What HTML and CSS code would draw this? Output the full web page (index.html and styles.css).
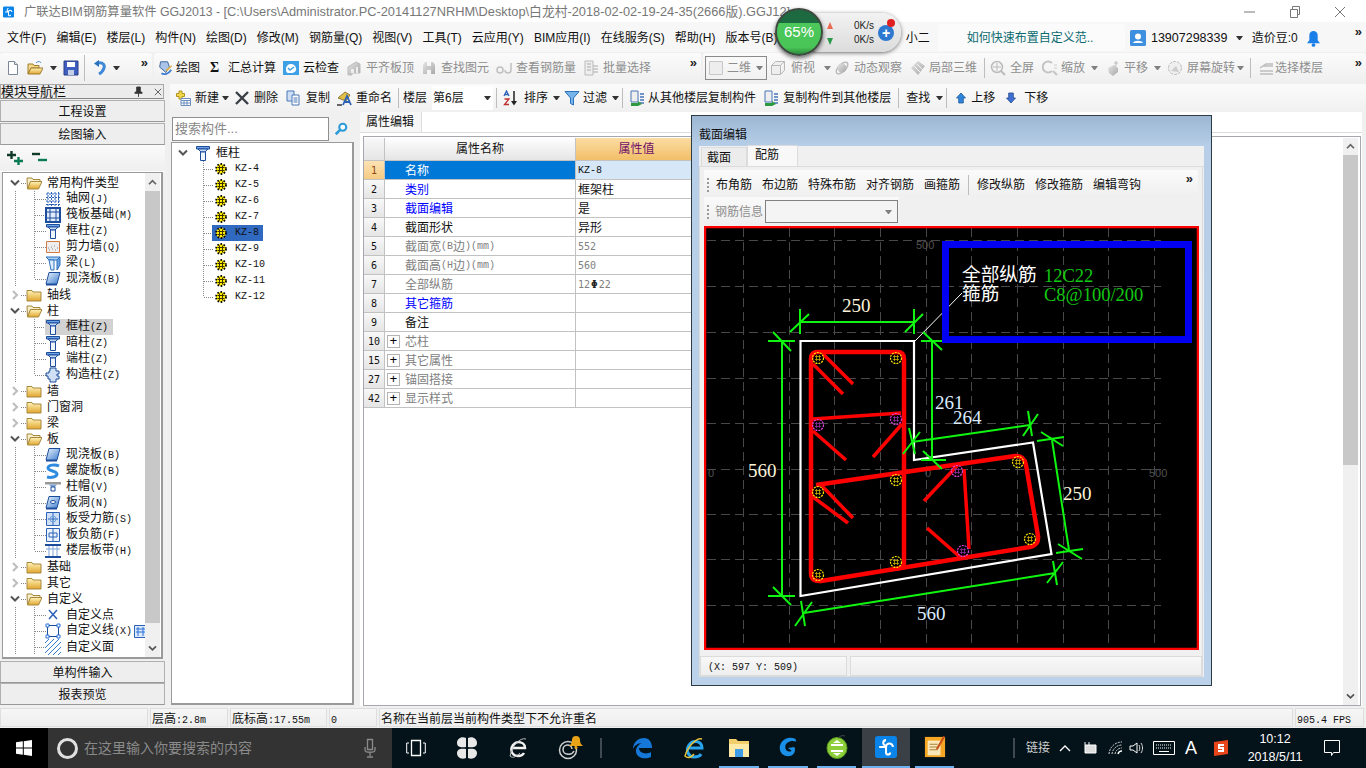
FILE: index.html
```html
<!DOCTYPE html>
<html lang="zh">
<head>
<meta charset="utf-8">
<title>广联达BIM钢筋算量软件</title>
<link rel="stylesheet" href="styles.css">
</head>
<body>
<svg class="defs" width="0" height="0" aria-hidden="true">
<defs>
<linearGradient id="fy" x1="0" y1="0" x2="0" y2="1"><stop offset="0" stop-color="#fff3b8"/><stop offset="1" stop-color="#e0a52e"/></linearGradient>
<linearGradient id="bl" x1="0" y1="0" x2="1" y2="1"><stop offset="0" stop-color="#eaf3fd"/><stop offset="1" stop-color="#3f7fd0"/></linearGradient>
<linearGradient id="gg" x1="0" y1="0" x2="1" y2="1"><stop offset="0" stop-color="#e4e4e4"/><stop offset="1" stop-color="#a8a8a8"/></linearGradient>
</defs>
<symbol id="col" viewBox="0 0 16 16"><path d="M1.500 1.500h13v2.500h-13z" fill="#6ea2e2" stroke="#1c4d9c"/><path d="M3 4l3 3h4l3-3z" fill="#c6dbf6" stroke="#1c4d9c"/><path d="M5.500 7h5v8.500h-5z" fill="#eef5fd" stroke="#1c4d9c"/></symbol>
<symbol id="fold" viewBox="0 0 16 16"><path d="M1 3.500h5l1 1.500h8v9H1z" fill="url(#fy)" stroke="#a7883f"/></symbol>
<symbol id="fopen" viewBox="0 0 16 16"><path d="M1 3h5l1 1.500h7V7H4.500L1.500 14z" fill="#f6eecb" stroke="#a7883f"/><path d="M1.500 14l3-7.500H16L12.500 14z" fill="url(#fy)" stroke="#a7883f"/></symbol>
<symbol id="cd" viewBox="0 0 10 8"><path d="M1 1.500l4 4 4-4" fill="none" stroke="#555" stroke-width="2"/></symbol>
<symbol id="cr" viewBox="0 0 10 10"><path d="M3 1l4 4-4 4" fill="none" stroke="#bdbdbd" stroke-width="2"/></symbol>
<symbol id="cup" viewBox="0 0 10 8"><path d="M1 6l4-4 4 4" fill="none" stroke="#666" stroke-width="2"/></symbol>
<symbol id="gridi" viewBox="0 0 16 16"><path d="M1 3h14M1 6.500h14M1 10h14M1 13.500h14M3 1v14M6.500 1v14M10 1v14M13.500 1v14" stroke="#2b62b8" fill="none" stroke-dasharray="2 1"/></symbol>
<symbol id="raft" viewBox="0 0 16 16"><path d="M1 1h14v14H1z" fill="#dfeafa" stroke="#1c4d9c" stroke-width="2"/><path d="M5 1v14M11 1v14M1 5h14M1 11h14" stroke="#1c4d9c"/></symbol>
<symbol id="wall" viewBox="0 0 16 16"><path d="M1.500 2.500h13v11h-13z" fill="#eee" stroke="#d07a45"/><path d="M4 11h1M7 10h1M10 11h1M6 8h1M9 7h1M3 9h1M12 9h1" stroke="#888"/></symbol>
<symbol id="beam" viewBox="0 0 16 16"><path d="M1 2h14l-3 3H4z" fill="#a9cdf2" stroke="#2b72bd"/><path d="M4 5h5v10H6z" fill="#dcebfb" stroke="#2b72bd"/><path d="M15 2v8l-3 5V5z" fill="#6ea2e2" stroke="#2b72bd"/></symbol>
<symbol id="slab" viewBox="0 0 16 16"><path d="M4 1.500h11L12 13H1z" fill="url(#bl)" stroke="#1c4d9c"/><path d="M1 13h11v1.500H1z" fill="#1c4d9c"/></symbol>
<symbol id="cons" viewBox="0 0 16 16"><path d="M5 1h6v3h3v3h-2v2h2v3h-3v3H5v-3H3V9H1V6h3V4h1z" fill="#cfe0f6" stroke="#1c4d9c"/></symbol>
<symbol id="helix" viewBox="0 0 16 16"><path d="M14 3C10 1 3 2 3 5s9 3 9 6-6 4-10 3" fill="none" stroke="#2f8be0" stroke-width="3"/></symbol>
<symbol id="cap" viewBox="0 0 16 16"><path d="M0 3h16v2.500H0z" fill="#999"/><path d="M4 5.500h8L10 8H6z" fill="#7fa5d8"/><path d="M6 8h4v4H6z" fill="#fff" stroke="#1c4d9c"/></symbol>
<symbol id="hole" viewBox="0 0 16 16"><use href="#slab"/><ellipse cx="8" cy="7" rx="2.500" ry="1.500" fill="#fff" stroke="#1c4d9c"/></symbol>
<symbol id="sbar" viewBox="0 0 16 16"><path d="M1.500 1.500h13v13h-13z" fill="#cfe0f6" stroke="#2b62b8"/><path d="M8 2v12M3 8h10" stroke="#2b62b8"/><circle cx="8" cy="8" r="3" fill="none" stroke="#6ea2e2"/></symbol>
<symbol id="nbar" viewBox="0 0 16 16"><path d="M1.500 1.500h13v13h-13z" fill="#eaf2fc" stroke="#2b62b8"/><path d="M8 2v12M4 6h8v4H4z" fill="none" stroke="#2b62b8"/></symbol>
<symbol id="band" viewBox="0 0 16 16"><path d="M0 2h16M0 14h16" stroke="#1c4d9c" stroke-width="2"/><path d="M4 3v10M8 3v10M12 3v10" stroke="#7fa5d8"/><path d="M1 6h14" stroke="#7fa5d8"/></symbol>
<symbol id="cpt" viewBox="0 0 16 16"><path d="M4 3l8 9M12 3l-8 9" stroke="#2b62b8" stroke-width="1.500"/></symbol>
<symbol id="cln" viewBox="0 0 16 16"><path d="M2.500 2.500h11v11h-11z" fill="none" stroke="#1c4d9c"/><path d="M1 1h3v3H1zM12 1h3v3h-3zM1 12h3v3H1zM12 12h3v3h-3z" fill="#fff" stroke="#2b72d8"/></symbol>
<symbol id="cfc" viewBox="0 0 16 16"><path d="M0 14L14 0M0 9l9-9M0 4l4-4M3 16L16 3M8 16l8-8M13 16l3-3" stroke="#3a7cd0"/></symbol>
<symbol id="gear" viewBox="0 0 14 14"><circle cx="7" cy="7" r="5" fill="#ffee00" stroke="#000" stroke-width="1.800" stroke-dasharray="1.600 1.600"/><path d="M3.500 5.500h7M3.500 8.500h7M5.500 3.500v7M8.500 3.500v7" stroke="#3d3200" stroke-width="1"/></symbol>
<symbol id="plus2" viewBox="0 0 18 16"><path d="M1 5h9M5.500 1v8" stroke="#123a28" stroke-width="2.400"/><path d="M8 11h9M12.500 7v8" stroke="#0a7a52" stroke-width="2.400"/></symbol>
<symbol id="minus2" viewBox="0 0 18 16"><path d="M1 4h8" stroke="#123a28" stroke-width="2.400"/><path d="M7 10h9" stroke="#0a7a52" stroke-width="2.400"/></symbol>
<symbol id="doc" viewBox="0 0 16 16"><path d="M3.500 1.500h6l3 3v10h-9z" fill="#fff" stroke="#7c8796"/><path d="M9.500 1.500v3h3" fill="#dde3ea" stroke="#7c8796"/></symbol>
<symbol id="open" viewBox="0 0 16 16"><path d="M1 4h5l1 1.500h5V8H4l-3 6z" fill="#f4d98a" stroke="#a17c2f"/><path d="M1 14l3-6h12l-3 6z" fill="url(#fy)" stroke="#a17c2f"/><path d="M9 3c2-2 4-2 5 0" fill="none" stroke="#3a7cd0"/></symbol>
<symbol id="save" viewBox="0 0 16 16"><path d="M1 1h14v14H1z" fill="#3f5fc0" stroke="#2a3d86"/><path d="M4 2h8v5H4z" fill="#fff"/><path d="M5 10h6v5H5z" fill="#c4cfe8"/></symbol>
<symbol id="undo" viewBox="0 0 16 16"><path d="M6 3c5-1 7 2 6 5s-3 5-5 6" fill="none" stroke="#3f88d8" stroke-width="3"/><path d="M7 0v7L2 3.500z" fill="#2b72bd"/></symbol>
<symbol id="draw" viewBox="0 0 18 18"><path d="M4 2h8l2 6-4 6-7-6z" fill="#a9c4e8" stroke="#355c96"/><path d="M5 15c3 2 8 1 11-4" fill="none" stroke="#3a7cd0" stroke-width="2"/><path d="M10 11l6-5 1 1-6 6z" fill="#e0b040"/></symbol>
<symbol id="cloud" viewBox="0 0 16 16"><path d="M0 1h16v14H0z" fill="#3da0e6"/><path d="M3 10a5 5 0 0 1 10-2c1 3-2 5-5 5H5c-1 0-2-1-2-3z" fill="#fff"/><path d="M5 8l2 2 4-3" fill="none" stroke="#3da0e6" stroke-width="1.500"/></symbol>
<symbol id="gbox" viewBox="0 0 16 16"><path d="M2 7l8-5 4 2v9H6v2H2z" fill="url(#gg)" stroke="#bbb"/><path d="M5 9h3v4H5zM10 7h2v6h-2z" fill="#eee"/></symbol>
<symbol id="bino" viewBox="0 0 16 16"><path d="M2 14V5l2-3h2v12zM10 14V2h2l2 3v9z" fill="url(#gg)"/><path d="M6 6h4v4H6z" fill="#c8c8c8"/></symbol>
<symbol id="hook" viewBox="0 0 16 16"><path d="M1 10a3 3 0 0 1 6 0 3 3 0 0 1-6 0zM9 10a3 3 0 0 0 6 0V3" fill="none" stroke="#c0c0c0" stroke-width="1.500"/></symbol>
<symbol id="batch" viewBox="0 0 16 16"><path d="M2 1h8v14H2z" fill="#eee" stroke="#bbb"/><path d="M4 4h4M4 7h4M4 10h4M10 6h5M10 9h5M10 12h5" stroke="#aaa"/></symbol>
<symbol id="cube" viewBox="0 0 16 16"><path d="M1.500 5.500h9v9h-9zM1.500 5.500l4-4h9l-4 4M10.500 14.500l4-4v-9" fill="#eee" stroke="#b8b8b8"/></symbol>
<symbol id="orbit" viewBox="0 0 16 16"><ellipse cx="8" cy="8" rx="7.500" ry="3.500" transform="rotate(-45 8 8)" fill="none" stroke="#bbb" stroke-width="1.500"/><circle cx="8" cy="8" r="4.500" fill="url(#gg)"/></symbol>
<symbol id="local" viewBox="0 0 16 16"><path d="M8 1l7 5-7 9-7-7z" fill="url(#gg)"/><path d="M4 6l6 6M7 4l6 6" stroke="#f4f4f4"/></symbol>
<symbol id="zoomf" viewBox="0 0 16 16"><circle cx="7" cy="7" r="5.500" fill="#f4f4f4" stroke="#bbb" stroke-width="1.500"/><path d="M7 3v8M3 7h8" stroke="#bbb"/><path d="M11 11l4 4" stroke="#bbb" stroke-width="2"/></symbol>
<symbol id="zoomc" viewBox="0 0 16 16"><path d="M10 3a5.500 5.500 0 1 0 0 8" fill="none" stroke="#c4c4c4" stroke-width="2"/><path d="M11 11l4 4" stroke="#c4c4c4" stroke-width="2"/><path d="M12 5h3M12 8h3" stroke="#ccc"/></symbol>
<symbol id="hand" viewBox="0 0 16 16"><path d="M3 8l6-3 4 3v4l-5 4-4-3z" fill="url(#gg)"/><path d="M11 1v5M9 3h4" stroke="#bbb"/></symbol>
<symbol id="rot" viewBox="0 0 16 16"><circle cx="8" cy="8" r="6.500" fill="#efefef" stroke="#bbb" stroke-dasharray="3 1"/><path d="M4 11l5-5 3 6z" fill="#ccc"/></symbol>
<symbol id="layer" viewBox="0 0 16 16"><path d="M2 8l6-4h7M2 11h13M2 14h13M5 6h10" fill="none" stroke="#bdbdbd" stroke-width="1.500"/></symbol>
<symbol id="addi" viewBox="0 0 16 16"><path d="M4 1h3v2.500h2.500v3H7V9H4V6.500H1.500v-3H4z" fill="#f1d84a" stroke="#b09320"/><path d="M6 8.500h9.500v7H6z" fill="#fff" stroke="#6c8ebf"/><path d="M6 10.500h9.500M9 10.500v5M12 10.500v5M6 13h9.500" stroke="#6c8ebf"/></symbol>
<symbol id="xi" viewBox="0 0 16 16"><path d="M2 2l12 12M14 2L2 14" stroke="#3a3f46" stroke-width="2.400"/></symbol>
<symbol id="copy" viewBox="0 0 16 16"><path d="M2 1h7v10H2z" fill="#cfe0f6" stroke="#4a76b8"/><path d="M7 5h7v10H7z" fill="#fff" stroke="#4a76b8"/><path d="M8.500 8h4M8.500 10h4M8.500 12h4" stroke="#4a76b8"/></symbol>
<symbol id="ren" viewBox="0 0 16 16"><path d="M2 8l7-6 5 3-4 6z" fill="#e4bf48" stroke="#8c7a2d"/><path d="M1 15h5" stroke="#666" stroke-width="2"/><path d="M7 15l4-9 4 9M9 12h4" fill="none" stroke="#2b62b8" stroke-width="1.800"/></symbol>
<symbol id="sort" viewBox="0 0 16 16"><path d="M1 6l2.500-5L6 6M2 4.500h3" fill="none" stroke="#2b62b8" stroke-width="1.300"/><path d="M1.500 9H6L1.500 14.500H6" fill="none" stroke="#c03030" stroke-width="1.300"/><path d="M11 1v12" stroke="#222" stroke-width="1.500"/><path d="M8 11l3 4.500 3-4.500z" fill="#222"/></symbol>
<symbol id="filt" viewBox="0 0 16 16"><path d="M1 1.500h14L9.500 8v7l-3-1.500V8z" fill="#78b3ea" stroke="#2b72bd"/></symbol>
<symbol id="cpy1" viewBox="0 0 16 16"><path d="M2 1h7v11H2z" fill="#eee" stroke="#4a76b8"/><path d="M11 4h4M11 7h4M11 10h4M11 13h4" stroke="#4a76b8" stroke-width="1.500"/><path d="M2 13h7v-2l4 3-4 2h-7z" fill="#2d9a3d"/></symbol>
<symbol id="upi" viewBox="0 0 16 16"><path d="M8 3l4.500 5H10.300V13H5.700V8H3.500z" fill="#2f83d8" stroke="#1c5aa0" stroke-width=".8"/></symbol>
<symbol id="dni" viewBox="0 0 16 16"><path d="M8 13L3.500 8H5.700V3h4.600v5h2.200z" fill="#3f6fd0" stroke="#23478f" stroke-width=".8"/></symbol>
<symbol id="appi" viewBox="0 0 16 16"><path d="M0 2a2 2 0 0 1 2-2h12a2 2 0 0 1 2 2v12a2 2 0 0 1-2 2H2a2 2 0 0 1-2-2z" fill="#0a84e8"/><path d="M8 3a2 2 0 0 0-2 2c0 1 1 2 2 2v5a1.500 1.500 0 0 0 3 0M3 8h5m0 0a2 2 0 0 1 5 0" fill="none" stroke="#fff" stroke-width="1.500"/></symbol>
<symbol id="user" viewBox="0 0 16 16"><path d="M0 1.500A1.500 1.500 0 0 1 1.500 0h13A1.500 1.500 0 0 1 16 1.500v13a1.500 1.500 0 0 1-1.500 1.500h-13A1.500 1.500 0 0 1 0 14.500z" fill="#3f8fe0"/><circle cx="8" cy="6.500" r="3" fill="#fff"/><path d="M3 13c1-3 9-3 10 0z" fill="#fff"/></symbol>
<symbol id="bell" viewBox="0 0 14 18"><path d="M7 1a4.500 4.500 0 0 0-4.500 4.500V11L0 14h14l-2.500-3V5.500A4.500 4.500 0 0 0 7 1z" fill="#1a7fe8"/><circle cx="7" cy="16" r="2" fill="#1a7fe8"/></symbol>
<symbol id="mag" viewBox="0 0 16 16"><circle cx="10" cy="6" r="4" fill="#fff" stroke="#2e9ad8" stroke-width="2.400"/><path d="M7 9l-5 5" stroke="#2e9ad8" stroke-width="3"/></symbol>
<symbol id="win" viewBox="0 0 16 16"><path d="M0 2.300L6.800 1.300V7.500H0zM7.800 1.200L16 0V7.500H7.800zM0 8.500H6.800V14.700L0 13.700zM7.800 8.500H16V16L7.800 14.800z" fill="#fff"/></symbol>
<symbol id="mic" viewBox="0 0 12 20"><path d="M3.500 1.500h5v10h-5z" fill="none" stroke="#8a8a8a" stroke-width="1.300"/><path d="M1 9v3c0 3 10 3 10 0V9M6 15v3M3 19h6" fill="none" stroke="#8a8a8a" stroke-width="1.300"/></symbol>
<symbol id="tview" viewBox="0 0 20 18"><path d="M5.500 1.500h9v15h-9z" fill="none" stroke="#fff" stroke-width="1.300"/><path d="M3 4H.7v10H3M17 4h2.300v10H17" fill="none" stroke="#fff"/></symbol>
<symbol id="fan" viewBox="0 0 22 24"><path d="M10 2c-5-2-9 1-9 5s4 5 9 4zM12 2c5-2 9 1 9 5s-4 5-9 4zM10 22c-5 2-9-1-9-5s4-5 9-4zM12 22c5 2 9-1 9-5s-4-5-9-4z" fill="#e8e8e8"/></symbol>
<symbol id="ie1" viewBox="0 0 20 24"><path d="M3 12h14c0-6-8-8-12-3-4 6 0 11 5 11 3 0 5-1 6-3" fill="none" stroke="#f2f2f2" stroke-width="2.400"/><path d="M18 3C12 1 4 10 2 20c3 3 7 0 10-3" fill="none" stroke="#bbb"/></symbol>
<symbol id="sw" viewBox="0 0 26 26"><circle cx="10" cy="15" r="8.500" fill="none" stroke="#cfcfcf" stroke-width="1.500"/><path d="M14 14a4.500 4.500 0 1 0-5 5c4 1 6-1 7-3" fill="none" stroke="#cfcfcf" stroke-width="1.500"/><path d="M18 1a4 4 0 0 1 4 4c0 3 1 4 3 6H11c2-2 3-3 3-6a4 4 0 0 1 4-4z" fill="#e8a317"/><circle cx="18" cy="12.500" r="1.500" fill="#e8a317"/></symbol>
<symbol id="edge" viewBox="0 0 20 22"><path d="M1 12C1 4 8 1 12 1c5 0 8 4 8 10H7c0 5 7 7 12 4v5c-6 3-15 1-15-6 0-4 3-7 6-8-4 0-8 3-9 6z" fill="#1578d8"/></symbol>
<symbol id="ie2" viewBox="0 0 22 24"><path d="M4 12h15c0-7-9-9-13-3-4 6 0 12 5 12 3 0 6-1 7-3" fill="none" stroke="#27a5ee" stroke-width="3"/><path d="M19 3C14 1 5 10 2 20c3 3 7 1 9-2" fill="none" stroke="#e6c23a" stroke-width="1.500"/></symbol>
<symbol id="fexp" viewBox="0 0 22 22"><path d="M1 3h7l2 2h11v16H1z" fill="#f2cf6a"/><path d="M1 8h20v13H1z" fill="#ffe9a6"/><path d="M7 13h8v8H7z" fill="#3f9de8"/></symbol>
<symbol id="gapp" viewBox="0 0 24 24"><path d="M20 3C10-1 3 6 3 13c0 6 5 9 9 9 6 0 9-5 7-10l-7 1 4 3c-2 2-7 1-7-4 0-5 6-8 12-6z" fill="#1a8fe8"/></symbol>
<symbol id="green" viewBox="0 0 22 24"><ellipse cx="11" cy="13" rx="10" ry="10.500" fill="#8ccf3a" stroke="#5a9a20"/><path d="M5 10h12M5 16h12" stroke="#fff" stroke-width="2"/><path d="M11 5l4 3H7zM11 21l-4-3h8z" fill="#fff"/><path d="M12 3c2-2 4-3 7-2" fill="none" stroke="#444"/></symbol>
<symbol id="note" viewBox="0 0 24 26"><path d="M1 2h22v22H1z" fill="#f5a623"/><path d="M4 6h14v16H4z" fill="#fbe8b8"/><path d="M6 10h9M6 13h9M6 16h9" stroke="#a07830"/><path d="M21 1l-8 14 2 1 8-14z" fill="#c8501a"/></symbol>
<symbol id="batt" viewBox="0 0 16 14"><path d="M3 4h11v8H3z" fill="#ddd" stroke="#fff"/><path d="M3 1v3M7 1v3" stroke="#fff"/></symbol>
<symbol id="wifi" viewBox="0 0 16 16"><path d="M1 14a13 13 0 0 1 13-12M4 14a10 10 0 0 1 10-9M7 14a7 7 0 0 1 7-6" fill="none" stroke="#ddd" stroke-dasharray="2 1"/><path d="M10 14a4 4 0 0 1 4-3" fill="none" stroke="#fff" stroke-width="1.500"/></symbol>
<symbol id="vol" viewBox="0 0 16 16"><path d="M1 6h3l4-3v10l-4-3H1z" fill="none" stroke="#fff"/><path d="M10 5c1 2 1 4 0 6M12 3c2 3 2 7 0 10" fill="none" stroke="#ddd"/></symbol>
<symbol id="kbd" viewBox="0 0 22 16"><path d="M.500 1.500h21v13H.500z" fill="none" stroke="#fff"/><path d="M3 5h16M3 8h16" stroke="#fff" stroke-dasharray="1 1"/><path d="M6 11.500h10" stroke="#fff"/></symbol>
<symbol id="sogou" viewBox="0 0 16 16"><path d="M1 2l14-2v14L1 16z" fill="#e8451a"/><path d="M11 5H6v3h4v3H5" fill="none" stroke="#fff" stroke-width="2"/></symbol>
<symbol id="notif" viewBox="0 0 16 16"><path d="M.500 .500h15v12H9.500l-2 3v-3h-7z" fill="none" stroke="#fff"/></symbol>
<symbol id="pin" viewBox="0 0 10 12"><path d="M3 1h4v5l2 1v1H1V7l2-1zM5 8v4" fill="#333" stroke="#333"/></symbol>
<symbol id="xs" viewBox="0 0 10 10"><path d="M1 1l8 8M9 1L1 9" stroke="#444"/></symbol>
</svg>

<header class="title">
  <svg class="i ti"><use href="#appi"/></svg>
  <span class="title-text">广联达BIM钢筋算量软件 GGJ2013 - <span class="tp">[C:\Users\Administrator.PC-20141127NRHM\Desktop\白龙村-2018-02-02-19-24-35(2666版).GGJ12]</span></span>
  <div class="winbtns">
    <svg class="wb" viewBox="0 0 12 12"><path d="M0 6h11" stroke="#777"/></svg>
    <svg class="wb" viewBox="0 0 12 12"><path d="M1.500 3.500h7v8h-7zM3.500 3.500v-3h7v8h-2" fill="none" stroke="#777"/></svg>
    <svg class="wb" viewBox="0 0 12 12"><path d="M1 1l10 10M11 1L1 11" stroke="#777"/></svg>
  </div>
</header>

<nav class="menu">
  <span>文件(F)</span><span>编辑(E)</span><span>楼层(L)</span><span>构件(N)</span><span>绘图(D)</span><span>修改(M)</span><span>钢筋量(Q)</span><span>视图(V)</span><span>工具(T)</span><span>云应用(Y)</span><span>BIM应用(I)</span><span>在线服务(S)</span><span>帮助(H)</span><span>版本号(B)</span>
  <span class="xiao">小二</span>
  <div class="tip">如何快速布置自定义范..</div>
  <svg class="i m5"><use href="#user"/></svg>
  <span class="phone">13907298339</span><i class="caret m7"></i>
  <span class="m10">造价豆:0</span>
  <svg class="bell"><use href="#bell"/></svg>
  <span class="chev top">»</span>
</nav>

<div class="tb1">
  <div class="grp g1">
    <svg class="i"><use href="#doc"/></svg>
    <svg class="i m6"><use href="#open"/></svg><i class="caret m7"></i>
    <svg class="i m6"><use href="#save"/></svg>
    <i class="sep tall m5"></i>
    <svg class="i m7"><use href="#undo"/></svg><i class="caret m5"></i>
    <span class="chev">»</span>
  </div>
  <div class="grp g2">
    <svg class="i"><use href="#draw"/></svg><span class="m3">绘图</span>
    <b class="sigma m10">Σ</b><span class="m8">汇总计算</span>
    <svg class="i m7"><use href="#cloud"/></svg><span class="m4">云检查</span>
    <svg class="i m7"><use href="#gbox"/></svg><span class="m4 off">平齐板顶</span>
    <svg class="i m7"><use href="#bino"/></svg><span class="m4 off">查找图元</span>
    <svg class="i m7"><use href="#hook"/></svg><span class="m4 off">查看钢筋量</span>
    <svg class="i m7"><use href="#batch"/></svg><span class="m4 off">批量选择</span>
    <span class="chev">»</span>
  </div>
  <div class="grp g3">
    <div class="combo2d"><svg class="sq" viewBox="0 0 16 16"><path d="M1.500 1.500h13v13h-13z" fill="#ededed" stroke="#c8c8c8"/></svg><span class="off m3">二维</span><i class="caret gray auto"></i></div>
    <svg class="i m3"><use href="#cube"/></svg><span class="off m5">俯视</span><i class="caret gray m9"></i>
    <svg class="i m3"><use href="#orbit"/></svg><span class="off m4">动态观察</span>
    <svg class="i m8"><use href="#local"/></svg><span class="off m3">局部三维</span>
    <i class="sep m7"></i>
    <svg class="i m5"><use href="#zoomf"/></svg><span class="off m4">全屏</span>
    <svg class="i m8"><use href="#zoomc"/></svg><span class="off m3">缩放</span><i class="caret gray m6"></i>
    <svg class="i m7"><use href="#hand"/></svg><span class="off m3">平移</span><i class="caret gray m6"></i>
    <svg class="i m6"><use href="#rot"/></svg><span class="off m4">屏幕旋转</span><i class="caret gray m2"></i>
    <i class="sep m6"></i>
    <svg class="i m7"><use href="#layer"/></svg><span class="off m1">选择楼层</span>
    <span class="chev">»</span>
  </div>
</div>

<main class="work">
  <aside class="dock">
    <div class="dock-head"><span>模块导航栏</span><svg class="pin"><use href="#pin"/></svg><svg class="xs"><use href="#xs"/></svg></div>
    <div class="nav-btn first">工程设置</div>
    <div class="nav-btn">绘图输入</div>
    <div class="dock-tools"><svg class="pm"><use href="#plus2"/></svg><svg class="pm"><use href="#minus2"/></svg></div>
    <div class="tree-box">
      <div class="tree">
        <div class="r f"><svg class="ch"><use href="#cd"/></svg><svg class="i"><use href="#fopen"/></svg><span>常用构件类型</span></div>
        <div class="r c"><svg class="i"><use href="#gridi"/></svg><span>轴网<b>(J)</b></span></div>
        <div class="r c"><svg class="i"><use href="#raft"/></svg><span>筏板基础<b>(M)</b></span></div>
        <div class="r c"><svg class="i"><use href="#col"/></svg><span>框柱<b>(Z)</b></span></div>
        <div class="r c"><svg class="i"><use href="#wall"/></svg><span>剪力墙<b>(Q)</b></span></div>
        <div class="r c"><svg class="i"><use href="#beam"/></svg><span>梁<b>(L)</b></span></div>
        <div class="r c last"><svg class="i"><use href="#slab"/></svg><span>现浇板<b>(B)</b></span></div>
        <div class="r f"><svg class="ch"><use href="#cr"/></svg><svg class="i"><use href="#fold"/></svg><span>轴线</span></div>
        <div class="r f"><svg class="ch"><use href="#cd"/></svg><svg class="i"><use href="#fopen"/></svg><span>柱</span></div>
        <div class="r c"><span class="hl"><svg class="i"><use href="#col"/></svg><span>框柱<b>(Z)</b></span></span></div>
        <div class="r c"><svg class="i"><use href="#col"/></svg><span>暗柱<b>(Z)</b></span></div>
        <div class="r c"><svg class="i"><use href="#col"/></svg><span>端柱<b>(Z)</b></span></div>
        <div class="r c last"><svg class="i"><use href="#cons"/></svg><span>构造柱<b>(Z)</b></span></div>
        <div class="r f"><svg class="ch"><use href="#cr"/></svg><svg class="i"><use href="#fold"/></svg><span>墙</span></div>
        <div class="r f"><svg class="ch"><use href="#cr"/></svg><svg class="i"><use href="#fold"/></svg><span>门窗洞</span></div>
        <div class="r f"><svg class="ch"><use href="#cr"/></svg><svg class="i"><use href="#fold"/></svg><span>梁</span></div>
        <div class="r f"><svg class="ch"><use href="#cd"/></svg><svg class="i"><use href="#fopen"/></svg><span>板</span></div>
        <div class="r c"><svg class="i"><use href="#slab"/></svg><span>现浇板<b>(B)</b></span></div>
        <div class="r c"><svg class="i"><use href="#helix"/></svg><span>螺旋板<b>(B)</b></span></div>
        <div class="r c"><svg class="i"><use href="#cap"/></svg><span>柱帽<b>(V)</b></span></div>
        <div class="r c"><svg class="i"><use href="#hole"/></svg><span>板洞<b>(N)</b></span></div>
        <div class="r c"><svg class="i"><use href="#sbar"/></svg><span>板受力筋<b>(S)</b></span></div>
        <div class="r c"><svg class="i"><use href="#nbar"/></svg><span>板负筋<b>(F)</b></span></div>
        <div class="r c last"><svg class="i"><use href="#band"/></svg><span>楼层板带<b>(H)</b></span></div>
        <div class="r f"><svg class="ch"><use href="#cr"/></svg><svg class="i"><use href="#fold"/></svg><span>基础</span></div>
        <div class="r f"><svg class="ch"><use href="#cr"/></svg><svg class="i"><use href="#fold"/></svg><span>其它</span></div>
        <div class="r f"><svg class="ch"><use href="#cd"/></svg><svg class="i"><use href="#fopen"/></svg><span>自定义</span></div>
        <div class="r c"><svg class="i"><use href="#cpt"/></svg><span>自定义点</span></div>
        <div class="r c"><svg class="i"><use href="#cln"/></svg><span>自定义线<b>(X)</b></span><svg class="new" viewBox="0 0 13 13"><path d="M.500 .500h12v12H.500z" fill="#dce9fa" stroke="#2b62b8"/><path d="M4 2v9M9 2v9M2 4h9M2 7h9" stroke="#2b72d8"/></svg></div>
        <div class="r c"><svg class="i"><use href="#cfc"/></svg><span>自定义面</span></div>
      </div>
      <div class="vs">
        <div class="vs-btn"><svg class="vs-a"><use href="#cup"/></svg></div>
        <div class="vs-thumb"></div>
        <div class="vs-btn"><svg class="vs-a"><use href="#cd"/></svg></div>
      </div>
    </div>
    <div class="nav-btn bot">单构件输入</div>
    <div class="nav-btn bot2">报表预览</div>
  </aside>

  <div class="right">
    <div class="tb2">
      <svg class="i"><use href="#addi"/></svg><span class="m4">新建</span><i class="caret m3"></i>
      <svg class="i m5"><use href="#xi"/></svg><span class="m4">删除</span>
      <svg class="i m7"><use href="#copy"/></svg><span class="m5">复制</span>
      <svg class="i m6"><use href="#ren"/></svg><span class="m4">重命名</span>
      <i class="sep m6"></i><span class="m4">楼层</span>
      <div class="floor m5"><span>第6层</span><i class="caret"></i></div>
      <i class="sep m3"></i>
      <svg class="i m6"><use href="#sort"/></svg><span class="m5">排序</span><i class="caret m5"></i>
      <svg class="i m4"><use href="#filt"/></svg><span class="m3">过滤</span><i class="caret m5"></i>
      <i class="sep m3"></i>
      <svg class="i m6"><use href="#cpy1"/></svg><span class="m3">从其他楼层复制构件</span>
      <svg class="i m7"><use href="#cpy1"/></svg><span class="m4">复制构件到其他楼层</span>
      <i class="sep m7"></i><span class="m7">查找</span><i class="caret m6"></i>
      <i class="sep m3"></i>
      <svg class="i m6"><use href="#upi"/></svg><span class="m2">上移</span>
      <svg class="i m8"><use href="#dni"/></svg><span class="m5">下移</span>
    </div>
    <div class="panes">
      <div class="list-pane">
        <div class="search"><div class="search-in">搜索构件...</div><svg class="mag"><use href="#mag"/></svg></div>
        <div class="kz-box">
          <div class="r kroot"><svg class="ch"><use href="#cd"/></svg><svg class="i"><use href="#col"/></svg><span>框柱</span></div>
          <div class="r k"><span class="kn"><svg class="g"><use href="#gear"/></svg><b>KZ-4</b></span></div>
          <div class="r k"><span class="kn"><svg class="g"><use href="#gear"/></svg><b>KZ-5</b></span></div>
          <div class="r k"><span class="kn"><svg class="g"><use href="#gear"/></svg><b>KZ-6</b></span></div>
          <div class="r k"><span class="kn"><svg class="g"><use href="#gear"/></svg><b>KZ-7</b></span></div>
          <div class="r k"><span class="kn sel"><svg class="g"><use href="#gear"/></svg><b>KZ-8</b></span></div>
          <div class="r k"><span class="kn"><svg class="g"><use href="#gear"/></svg><b>KZ-9</b></span></div>
          <div class="r k"><span class="kn"><svg class="g"><use href="#gear"/></svg><b>KZ-10</b></span></div>
          <div class="r k"><span class="kn"><svg class="g"><use href="#gear"/></svg><b>KZ-11</b></span></div>
          <div class="r k end"><span class="kn"><svg class="g"><use href="#gear"/></svg><b>KZ-12</b></span></div>
        </div>
      </div>
      <section class="prop">
        <div class="prop-tabs"><div class="prop-tab">属性编辑</div></div>
        <div class="prop-box">
          <div class="pg">
            <div class="ph num"></div><div class="ph name">属性名称</div><div class="ph val">属性值</div>

            <div class="num act">1</div><div class="nm actn">名称</div><div class="vl actv"><b>KZ-8</b></div>
            <div class="num">2</div><div class="nm lnk">类别</div><div class="vl">框架柱</div>
            <div class="num">3</div><div class="nm lnk">截面编辑</div><div class="vl">是</div>
            <div class="num">4</div><div class="nm">截面形状</div><div class="vl">异形</div>
            <div class="num">5</div><div class="nm gr">截面宽<b>(B</b>边<b>)(mm)</b></div><div class="vl gr sm">552</div>
            <div class="num">6</div><div class="nm gr">截面高<b>(H</b>边<b>)(mm)</b></div><div class="vl gr sm">560</div>
            <div class="num">7</div><div class="nm gr">全部纵筋</div><div class="vl gr sm">12<em class="rb">Φ</em>22</div>
            <div class="num">8</div><div class="nm lnk">其它箍筋</div><div class="vl"></div>
            <div class="num">9</div><div class="nm">备注</div><div class="vl"></div>
            <div class="num">10</div><div class="nm gr ex"><i class="pb">+</i>芯柱</div><div class="vl"></div>
            <div class="num">15</div><div class="nm gr ex"><i class="pb">+</i>其它属性</div><div class="vl"></div>
            <div class="num">27</div><div class="nm gr ex"><i class="pb">+</i>锚固搭接</div><div class="vl"></div>
            <div class="num">42</div><div class="nm gr ex"><i class="pb">+</i>显示样式</div><div class="vl"></div>
          </div>
          <div class="prop-vs">
            <div class="pvs-btn"><svg class="vs-a"><use href="#cup"/></svg></div>
            <div class="pvs-thumb"></div>
            <div class="pvs-rest"></div>
            <div class="pvs-btn"><svg class="vs-a"><use href="#cd"/></svg></div>
          </div>
        </div>
      </section>
    </div>
  </div>
</main>

<footer class="status">
  <div class="st s1"></div>
  <div class="st s2">层高<b>:2.8m</b></div>
  <div class="st s3">底标高<b>:17.55m</b></div>
  <div class="st s4"><b>0</b></div>
  <div class="st s5">名称在当前层当前构件类型下不允许重名</div>
  <div class="st s6"><b>905.4 FPS</b></div>
</footer>

<div class="taskbar">
  <div class="start"><svg class="winl"><use href="#win"/></svg></div>
  <div class="tsearch"><i class="ring"></i><span>在这里输入你要搜索的内容</span><svg class="mic"><use href="#mic"/></svg></div>
  <svg class="tk tk-view"><use href="#tview"/></svg>
  <svg class="tk tk-fan"><use href="#fan"/></svg>
  <svg class="tk tk-ie"><use href="#ie1"/></svg>
  <svg class="tk tk-sw"><use href="#sw"/></svg>
  <i class="tsep"></i>
  <svg class="tk tk-edge"><use href="#edge"/></svg>
  <svg class="tk tk-ie2"><use href="#ie2"/></svg>
  <div class="tile t1"><svg class="tk0"><use href="#fexp"/></svg></div>
  <div class="tile t2"><svg class="tk0"><use href="#gapp"/></svg></div>
  <div class="tile t3"><svg class="tk0"><use href="#green"/></svg></div>
  <div class="tile t4"><svg class="tk0"><use href="#appi"/></svg></div>
  <div class="tile t5"><svg class="tk0"><use href="#note"/></svg></div>
  <i class="tsep s2b"></i>
  <span class="tlink">链接</span>
  <svg class="tc tc-up" viewBox="0 0 12 8"><path d="M1 7l5-5 5 5" fill="none" stroke="#fff" stroke-width="1.300"/></svg>
  <svg class="tc tc-b"><use href="#batt"/></svg>
  <svg class="tc tc-w"><use href="#wifi"/></svg>
  <svg class="tc tc-v"><use href="#vol"/></svg>
  <svg class="tc tc-k"><use href="#kbd"/></svg>
  <span class="tA">A</span>
  <svg class="tc tc-s"><use href="#sogou"/></svg>
  <div class="clock"><span>10:12</span><span>2018/5/11</span></div>
  <svg class="tc tc-n"><use href="#notif"/></svg>
</div>

<div class="speed">
  <div class="orb"><span>65%</span></div>
  <div class="arrows"><i class="au"></i><i class="ad"></i></div>
  <div class="rates"><span>0K/s</span><span>0K/s</span></div>
  <div class="plus">+<i class="reddot"></i></div>
</div>

<section class="dialog">
  <div class="dlg-title">截面编辑</div>
  <div class="dlg-body">
    <div class="dlg-tabs"><div class="dtab">截面</div><div class="dtab on">配筋</div></div>
    <div class="dlg-panel">
      <div class="dtb1"><i class="grip"></i><span>布角筋</span><span>布边筋</span><span>特殊布筋</span><span>对齐钢筋</span><span>画箍筋</span><i class="sep d"></i><span>修改纵筋</span><span>修改箍筋</span><span>编辑弯钩</span><span class="chev">»</span></div>
      <div class="dtb2"><i class="grip"></i><span class="off">钢筋信息</span><div class="dcombo"><i class="caret gray"></i></div></div>
      <svg class="cad" viewBox="704 227 495 424">
        <defs>
          <g id="ry"><circle r="5.500" fill="none" stroke="#ffe400" stroke-width="1.200" stroke-dasharray="2 1"/><path d="M-3-1.500h6M-3 1.500h6M-1.500-3v6M1.500-3v6" stroke="#c8ae00" stroke-width=".8"/></g>
          <g id="rm"><circle r="5.500" fill="none" stroke="#e040e0" stroke-width="1.200" stroke-dasharray="2 1"/><path d="M-3-1.500h6M-3 1.500h6M-1.500-3v6M1.500-3v6" stroke="#9030a0" stroke-width=".8"/></g>
        </defs>
        <rect x="704" y="227" width="495" height="424" fill="#000"/>
        <path class="grid" d="M743.500 229V651M789.500 229V651M834.500 229V651M880.500 229V651M926.500 229V651M971.500 229V651M1017.500 229V651M1063.500 229V651M1108.500 229V651M1154.500 229V651M707 241.500H1161M707 287.500H1161M707 333.500H1161M707 379.500H1161M707 424.500H1161M707 470.500H1161M707 515.500H1161M707 560.500H1161M707 606.500H1161"/>
        <text class="gl" x="916" y="250">500</text>
        <text class="gl" x="708" y="478">0</text>
        <text class="gl" x="925" y="478">0</text>
        <text class="gl" x="1149" y="478">500</text>
        <path class="ld" d="M915 342L962 294"/>
        <rect class="blue" x="945.500" y="245.500" width="243" height="95"/>
        <path class="out" d="M800.500 342H914V461L1033 443.500L1051.500 555L800.500 597Z"/>
        <path class="rb" d="M904 564V360Q904 353 897 353H818Q811 353 811 360V574Q811 583 821 582L1030 548Q1039 546 1038 537L1026 466Q1024 456 1015 457L816 486M904 564Q904 569 897 570"/>
        <path class="rb2" d="M813 420L901 414M823 355L853 385M813 365L843 395M813 432L846 461M902 425L873 458M822 487L853 519M813 498L848 524M957 467L924 502M964 470L969 550M927 529L960 558"/>
        <use href="#ry" x="818" y="359"/><use href="#ry" x="896" y="359"/><use href="#ry" x="896" y="481"/><use href="#ry" x="818" y="493"/><use href="#ry" x="896" y="563"/><use href="#ry" x="818" y="576"/><use href="#ry" x="1018" y="463"/><use href="#ry" x="1030" y="540"/>
        <use href="#rm" x="818" y="426"/><use href="#rm" x="896" y="420"/><use href="#rm" x="957" y="472"/><use href="#rm" x="963" y="552"/>
        <path class="dim" d="M782 342V597M768 342H795M773 333L791 352M768 597H795M773 588L791 606M932 342V461M921 342H942M923 333L942 351M921 461H946M923 452L942 470M800 323H914M800 310V335M790 333L809 315M914 310V335M905 333L923 315M912 443L1030 426M909 429L915 455M903 455L920 433M1028 412L1032 437M1023 437L1038 415M1052 441L1069 551M1037 442L1064 438M1041 433L1063 447M1056 554L1083 550M1058 545L1082 560M804 614L1055 574M801 602L805 627M795 627L812 603M1053 562L1057 586M1047 584L1063 563"/>
        <text class="cn" x="962" y="282">全部纵筋</text>
        <text class="cn" x="962" y="301">箍筋</text>
        <text class="gt" x="1044" y="283">12C22</text>
        <text class="gt" x="1044" y="302">C8@100/200</text>
        <text class="dm y" x="842" y="313">250</text>
        <text class="dm y" x="748" y="478">560</text>
        <text class="dm b" x="935" y="410">261</text>
        <text class="dm b" x="953" y="425">264</text>
        <text class="dm y" x="1063" y="501">250</text>
        <text class="dm b" x="917" y="621">560</text>
        <rect class="frame" x="705" y="228" width="493" height="422"/>
      </svg>
      <div class="dst"><div class="dst1"><b>(X: 597 Y: 509)</b></div><div class="dst2"></div></div>
    </div>
  </div>
</section>
</body>
</html>
```

FILE: styles.css
```css
* { box-sizing: border-box; }
html, body { margin: 0; height: 100%; }
body {
  width: 1366px; height: 768px; overflow: hidden;
  display: flex; flex-direction: column;
  background: #f0f0f0; color: #111;
  font: 12px/16px "Liberation Sans", "Noto Sans CJK SC", sans-serif;
  position: relative;
}
.defs { display: block; flex: none; }
i, em { font-style: normal; }
.i { width: 16px; height: 16px; flex: none; display: block; }
.m1 { margin-left: 1px; } .m2 { margin-left: 2px; } .m3 { margin-left: 3px; } .m4 { margin-left: 4px; }
.m5 { margin-left: 5px; } .m6 { margin-left: 6px; } .m7 { margin-left: 7px; } .m8 { margin-left: 8px; }
.m9 { margin-left: 9px; } .m10 { margin-left: 10px; }
.off { color: #8e8e8e; }
.caret { display: block; flex: none; width: 7px; height: 4px; border-left: 3.5px solid transparent; border-right: 3.5px solid transparent; border-top: 4px solid #333; }
.caret.gray { border-top-color: #808080; }
.caret.auto { margin-left: auto; margin-right: 3px; }
.sep { display: block; flex: none; width: 1px; height: 20px; background: #bdbdbd; }
.sep.tall { height: 26px; }
.chev { margin-left: auto; align-self: flex-start; font: bold 13px/12px "Liberation Sans", sans-serif; color: #222; margin-right: 4px; }

/* title */
.title { height: 22px; flex: none; display: flex; align-items: center; background: #fff; position: relative; padding-top: 1px; }
.ti { width: 11px; height: 12px; margin-left: 3px; }
.title-text { margin-left: 10px; color: #777; font-size: 12.300px; white-space: nowrap; width: 770px; overflow: hidden; }
.tp { font-size: 12.800px; }
.winbtns { margin-left: auto; display: flex; align-items: center; gap: 33px; padding-right: 20px; }
.wb { width: 12px; height: 12px; display: block; }

/* menu */
.menu { height: 30px; flex: none; display: flex; align-items: center; background: #f7f7f7; padding: 2px 0 0 7px; white-space: nowrap; gap: 10.100px; }
.xiao { margin-left: 118px; }
.tip { width: 187px; height: 27px; margin-left: -2px; margin-top: -2px; background: #fbfbfb; color: #0a6a70; padding-left: 29px; line-height: 29px; border-radius: 3px; }
.menu .m5 { margin-left: -5px; }
.phone { margin-left: -5px; font-size: 12.500px; }
.menu .m7 { margin-left: -2px; }
.menu .m10 { margin-left: -1px; }
.bell { width: 13px; height: 17px; margin-left: -1px; flex: none; }
.chev.top { margin-top: 2px; }

/* toolbar 1 */
.tb1 { height: 28px; flex: none; margin: 1px 0 3px; display: flex; white-space: nowrap; }
.grp { display: flex; align-items: center; height: 28px; padding-top: 2px; background: linear-gradient(#fbfbfb, #f0f0f0); border-radius: 3px; }
.g1 { width: 152px; padding-left: 5px; }
.g2 { width: 547px; margin-left: 2px; padding-left: 3px; }
.g3 { flex: 1; margin-left: 2px; padding-left: 2px; }
.grp .chev { margin-top: 2px; }
.sigma { font: bold 14px/16px "Liberation Serif", serif; width: 10px; flex: none; }
.combo2d { width: 62px; height: 24px; flex: none; border: 1px solid #8a8a8a; display: flex; align-items: center; padding-left: 2px; }
.sq { width: 16px; height: 16px; flex: none; }

/* work */
.work { height: 623px; flex: none; display: flex; }
.dock { width: 165px; flex: none; display: flex; flex-direction: column; }
.dock-head { height: 15px; flex: none; margin: 0 1px 0 0; border: 1px solid #a8a8a8; border-bottom-color: #888; background: #ececec; display: flex; align-items: center; font-size: 13px; line-height: 13px; overflow: hidden; }
.pin { width: 9px; height: 11px; margin-left: 68px; flex: none; }
.xs { width: 8px; height: 8px; margin-left: 11px; flex: none; }
.nav-btn { height: 22px; flex: none; border: 1px solid #b0b0b0; border-bottom-color: #999; background: #eeeeee; text-align: center; line-height: 22px; margin-top: 1px; }
.dock-tools { height: 27px; flex: none; display: flex; align-items: center; padding-left: 6px; gap: 7px; background: linear-gradient(#fafafa, #efefef); border-bottom: 1px solid #fff; }
.pm { width: 18px; height: 16px; flex: none; }
.tree-box { height: 487px; flex: none; margin: 0 2px; border: 1px solid #9a9a9a; border-width: 1px 2px 2px 1px; background: #fff; display: flex; overflow: hidden; }
.tree { flex: 1; overflow: hidden; padding-top: 2px; min-width: 0; }
.r { height: 16px; display: flex; align-items: center; white-space: nowrap; }
.r b { font: 10px/16px "Liberation Mono", monospace; }
.ch { width: 10px; height: 10px; flex: none; }
.f { padding-left: 7px; background: repeating-linear-gradient(90deg, #888 0 1px, transparent 1px 2px) 18px 8px / 5px 1px no-repeat; }
.f .i { margin-left: 6px; }
.f > span { margin-left: 5px; }
.c {
  padding-left: 42px;
  background-image: repeating-linear-gradient(#888 0 1px, transparent 1px 2px), repeating-linear-gradient(#888 0 1px, transparent 1px 2px), repeating-linear-gradient(90deg, #888 0 1px, transparent 1px 2px);
  background-size: 1px 100%, 1px 100%, 11px 1px;
  background-position: 12px 0, 31px 0, 32px 8px;
  background-repeat: no-repeat;
}
.c.last { background-size: 1px 100%, 1px 8px, 11px 1px; }
.c > span { margin-left: 5px; }
.c > .hl { display: flex; align-items: center; margin-left: 0; background: #d2d2d2; height: 16px; padding-right: 5px; }
.hl > span { margin-left: 5px; }
.new { width: 13px; height: 13px; flex: none; margin-left: 2px; }
.vs { width: 15px; flex: none; margin-right: 1px; display: flex; flex-direction: column; background: #f0f0f0; }
.vs-btn { height: 18px; flex: none; display: flex; align-items: center; justify-content: center; }
.vs-a { width: 9px; height: 7px; display: block; }
.vs-thumb { flex: 1; background: #c8c8c8; margin-bottom: 16px; }
.nav-btn.bot { margin-top: 2px; }
.nav-btn.bot2 { margin-top: 0; }

/* right */
.right { flex: 1; margin-left: 5px; display: flex; flex-direction: column; min-width: 0; }
.tb2 { height: 28px; flex: none; display: flex; align-items: center; padding-left: 5px; background: linear-gradient(#fbfbfb, #f0f0f0); white-space: nowrap; }
.floor { width: 61px; height: 24px; flex: none; background: #fff; display: flex; align-items: center; padding-left: 1px; justify-content: space-between; padding-right: 2px; }
.panes { flex: 1; display: flex; min-height: 0; }
.list-pane { width: 184px; flex: none; margin-left: 1px; display: flex; flex-direction: column; padding: 5px 0 2px; }
.search { height: 25px; flex: none; display: flex; align-items: flex-start; }
.search-in { width: 157px; height: 24px; margin-left: 1px; background: #fff; border: 1px solid #8f8f8f; color: #888; font-size: 13px; line-height: 22px; padding-left: 2px; }
.mag { width: 14px; height: 14px; margin: 5px 0 0 5px; flex: none; }
.kz-box { flex: 1; width: 183px; border: 1px solid #9a9a9a; border-width: 1px 2px 2px 1px; background: #fff; padding-top: 2px; }
.kroot { padding-left: 6px; }
.kroot .i { margin-left: 7px; }
.kroot > span { margin-left: 5px; }
.k {
  padding-left: 40px;
  background-image: repeating-linear-gradient(#888 0 1px, transparent 1px 2px), repeating-linear-gradient(90deg, #888 0 1px, transparent 1px 2px);
  background-size: 1px 100%, 10px 1px;
  background-position: 31px 0, 32px 8px;
  background-repeat: no-repeat;
}
.k.end { background-size: 1px 8px, 10px 1px; }
.kn { display: flex; align-items: center; height: 16px; padding: 0 4px 0 2px; }
.kn.sel { background: #3069c0; }
.g { width: 14px; height: 14px; flex: none; }
.kn b { margin-left: 7px; }
.prop { width: 1002px; flex: none; margin-left: 5px; background: #fff; display: flex; flex-direction: column; margin-bottom: 1px; }
.prop-tabs { height: 21px; flex: none; border-bottom: 1px solid #dcdcdc; display: flex; }
.prop-tab { width: 62px; height: 20px; background: #f7f7f7; border-right: 1px solid #dcdcdc; padding-left: 6px; line-height: 20px; font-size: 12px; }
.prop-box { flex: 1; margin: 3px 1px 0 3px; border: 1px solid #a6a8ad; display: flex; min-height: 0; }
.pg { flex: none; width: 334px; margin-top: 1px; display: grid; grid-template-columns: 21px 191px 1fr; grid-auto-rows: 19px; grid-template-rows: 23px; align-content: start; }
.pg > div { border-bottom: 1px solid #c2c2c2; border-right: 1px solid #c2c2c2; display: flex; align-items: center; overflow: hidden; white-space: nowrap; }
.pg > .nm, .pg > .vl, .pg > .num { padding-top: 1px; }
.ph { background: linear-gradient(#fefefe, #e5e5e5); justify-content: center; }
.pg > .val { background: linear-gradient(#fbdca3, #f2bf68); color: #70106a; }
.num { background: linear-gradient(#f8f8f8, #e5e5e5); justify-content: center; font: 10px/18px "DejaVu Sans Mono", monospace; }
.pg > .num.act { background: linear-gradient(#fde2b4, #f6cb84); color: #8a4a10; }
.nm { padding-left: 20px; }
.vl { padding-left: 2px; }
.vl b { font: 10px "Liberation Mono", monospace; }
.nm b { font: 10px "Liberation Mono", monospace; }
.actn { background: #0078d7; color: #fff; }
.actv { background: #d6e8f8; }
.lnk { color: #0000ff; }
.gr { color: #808080; }
.sm { font: 10px "DejaVu Sans Mono", "Liberation Mono", monospace; }
.rb { color: #222; margin: 0 1px; font-size: 11px; font-weight: bold; }
.pg > .ex { padding-left: 2px; }
.pb { width: 13px; height: 13px; border: 1px solid #b4b4b4; margin-right: 5px; display: flex; align-items: center; justify-content: center; color: #000; font: 13px/11px "Liberation Mono", monospace; background: #fff; }
.prop-vs { width: 15px; flex: none; margin: 1px 2px 0 auto; display: flex; flex-direction: column; }
.pvs-btn { height: 17px; flex: none; display: flex; align-items: center; justify-content: center; background: #f0f0f0; }
.pvs-thumb { height: 310px; flex: none; background: #c8c8c8; }
.pvs-rest { flex: 1; background: #f0f0f0; }

/* status */
.status { height: 21px; flex: none; display: flex; gap: 2px; padding-top: 1px; align-items: stretch; background: #f0f0f0; }
.st { height: 19px; flex: none; border: 1px solid #dedede; background: linear-gradient(#f6f6f6, #eeeeee); line-height: 18px; padding-left: 1px; padding-top: 1px; white-space: nowrap; font-size: 12px; }
.st b { font: 10px "Liberation Mono", monospace; }
.s1 { width: 148px; } .s2 { width: 78px; } .s3 { width: 97px; } .s4 { width: 48px; } .s5 { width: 914px; } .s6 { width: 69px; }

/* taskbar */
.taskbar { height: 40px; flex: none; background: #04131a; display: flex; align-items: center; color: #fff; }
.start { width: 48px; height: 40px; flex: none; background: #000; display: flex; align-items: center; justify-content: center; }
.winl { width: 16px; height: 16px; }
.tsearch { width: 344px; height: 40px; flex: none; background: #333; display: flex; align-items: center; padding-left: 9px; color: #8a8a8a; font-size: 14px; }
.ring { width: 21px; height: 21px; flex: none; border: 3px solid #e0e0e0; border-radius: 50%; margin-right: 6px; }
.mic { width: 12px; height: 20px; margin-left: auto; margin-right: 16px; flex: none; }
.tk { flex: none; display: block; }
.tk-view { width: 20px; height: 18px; margin-left: 14px; }
.tk-fan { width: 22px; height: 24px; margin-left: 30px; }
.tk-ie { width: 20px; height: 24px; margin-left: 30px; }
.tk-sw { width: 26px; height: 26px; margin-left: 30px; }
.tsep { width: 2px; height: 20px; flex: none; background: #3f4a50; margin-left: 16px; display: block; }
.tk-edge { width: 20px; height: 22px; margin-left: 30px; }
.tk-ie2 { width: 22px; height: 24px; margin-left: 31px; }
.tile { height: 40px; flex: none; display: flex; align-items: center; justify-content: center; border-bottom: 2px solid #6db0ee; }
.tk0 { width: 22px; height: 24px; display: block; }
.t1 { width: 40px; margin-left: 14px; }
.t2 { width: 40px; margin-left: 9px; }
.t3 { width: 39px; margin-left: 9px; }
.t4 { width: 48px; margin-left: 6px; background: #3a4045; }
.t5 { width: 39px; margin-left: 5px; }
.tsep.s2b { margin-left: 59px; }
.tlink { margin-left: 11px; color: #cfcfcf; font-size: 12px; }
.tc { display: block; flex: none; }
.tc-up { width: 12px; height: 8px; margin-left: 9px; }
.tc-b { width: 16px; height: 14px; margin-left: 11px; }
.tc-w { width: 16px; height: 16px; margin-left: 10px; }
.tc-v { width: 16px; height: 16px; margin-left: 5px; }
.tc-k { width: 22px; height: 16px; margin-left: 8px; }
.tA { margin-left: 10px; font-size: 18px; width: 14px; flex: none; line-height: 20px; }
.tc-s { width: 16px; height: 16px; margin-left: 14px; }
.clock { width: 62px; margin-left: 15px; flex: none; display: flex; flex-direction: column; align-items: center; font-size: 12.500px; line-height: 18px; color: #fff; }
.tc-n { width: 16px; height: 16px; margin-left: 18px; }

/* speed widget */
.speed { position: absolute; left: 775px; top: 8px; width: 127px; height: 49px; }
.speed::before { content: ""; position: absolute; left: 25px; top: 5px; width: 101px; height: 39px; border-radius: 20px; background: linear-gradient(#f2f2f2, #dcdcdc); box-shadow: 0 1px 4px rgba(0,0,0,.55); }
.orb { position: absolute; left: 0; top: 0; width: 48px; height: 48px; border-radius: 50%; border: 2px solid #3e4a40; background: linear-gradient(#1e6a40 0 30%, #4cc85c 30%, #49c456 85%, #2c8f3c 100%); box-shadow: 0 2px 4px rgba(0,0,0,.6); display: flex; align-items: center; justify-content: center; color: #fff; font-size: 15px; }
.arrows { position: absolute; left: 52px; top: 14px; display: flex; flex-direction: column; gap: 9px; }
.au, .ad { display: block; width: 0; height: 0; border-left: 3px solid transparent; border-right: 3px solid transparent; }
.au { border-bottom: 7px solid #e86a50; }
.ad { border-top: 7px solid #2a9a4a; }
.rates { position: absolute; left: 79px; top: 11px; display: flex; flex-direction: column; font-size: 10px; line-height: 14px; color: #222; }
.plus { position: absolute; left: 103px; top: 17px; width: 16px; height: 16px; border-radius: 50%; background: #2f78d0; color: #fff; font: bold 14px/16px "Liberation Sans", sans-serif; text-align: center; }
.reddot { position: absolute; right: -1px; top: -6px; width: 8px; height: 8px; border-radius: 50%; background: #e02020; }

/* dialog */
.dialog { position: absolute; left: 691px; top: 115px; width: 521px; height: 571px; border: 1px solid #2d3b42; background: linear-gradient(#9cb6d3, #b6cee7 30px, #bcd2ea); display: flex; flex-direction: column; padding: 0 7px 8px; }
.dlg-title { height: 30px; flex: none; padding-top: 11px; line-height: 16px; color: #111; }
.dlg-body { flex: 1; background: #f0f0f0; display: flex; flex-direction: column; min-height: 0; }
.dlg-tabs { height: 21px; flex: none; display: flex; align-items: flex-end; padding-left: 2px; border-bottom: 1px solid #dcdcdc; }
.dtab { width: 46px; height: 19px; background: #ececec; border: 1px solid #dcdcdc; border-bottom: 0; padding-left: 5px; line-height: 20px; }
.dtab.on { width: 51px; height: 21px; background: #f8f8f8; line-height: 18px; padding-left: 7px; }
.dlg-panel { flex: 1; border: 1px solid #dcdcdc; margin-right: 1px; border-top: 0; padding: 3px 4px 0; display: flex; flex-direction: column; min-height: 0; }
.dtb1 { height: 27px; flex: none; display: flex; align-items: center; padding-top: 2px; background: linear-gradient(#fbfbfb, #efefef); gap: 10px; white-space: nowrap; }
.grip { width: 2px; height: 14px; flex: none; display: block; margin-left: 3px; margin-right: -3px; background: repeating-linear-gradient(#999 0 2px, transparent 2px 4px); }
.sep.d { margin: 0 -2px; }
.dtb1 .chev { margin-top: 1px; margin-right: 5px; }
.dtb2 { height: 29px; width: 195px; flex: none; display: flex; align-items: center; gap: 6px; background: linear-gradient(#fafafa, #eeeeee); }
.dtb2 .grip { margin-right: 0; }
.dcombo { width: 133px; height: 23px; border: 1px solid #808080; background: #f4f4f4; display: flex; align-items: center; justify-content: flex-end; padding-right: 5px; margin-left: -4px; }
.cad { display: block; width: 495px; height: 424px; flex: none; margin-top: 0; }
.grid { fill: none; stroke: #484848; stroke-dasharray: 9 5; shape-rendering: crispEdges; }
.gl { fill: #505050; font: 11px "Liberation Sans", sans-serif; }
.ld { stroke: #fff; fill: none; }
.blue { fill: none; stroke: #0000f0; stroke-width: 7; }
.out { fill: none; stroke: #fff; stroke-width: 2.200; }
.rb { fill: none; stroke: #ff0000; stroke-width: 4.500; stroke-linejoin: round; }
.rb2 { fill: none; stroke: #ff0000; stroke-width: 3.500; }
.dim { fill: none; stroke: #10f510; stroke-width: 2; }
.cn { fill: #fff; font: 18.700px "Noto Sans CJK SC", sans-serif; }
.gt { fill: #12c812; font: 18.500px "Liberation Serif", serif; }
.dm { font: 19px "Liberation Serif", serif; }
.dm.y { fill: #fbf3da; }
.dm.b { fill: #dcecff; }
.frame { fill: none; stroke: #ff0000; stroke-width: 2.500; }
.dst { height: 20px; flex: none; margin: 6px -4px 0; display: flex; gap: 3px; }
.dst > div { border: 1px solid #dcdcdc; background: linear-gradient(#f8f8f8, #eee); line-height: 18px; padding-left: 7px; }
.dst b { font: 10px "Liberation Mono", monospace; }
.dst1 { width: 147px; flex: none; }
.dst2 { flex: 1; }
```
